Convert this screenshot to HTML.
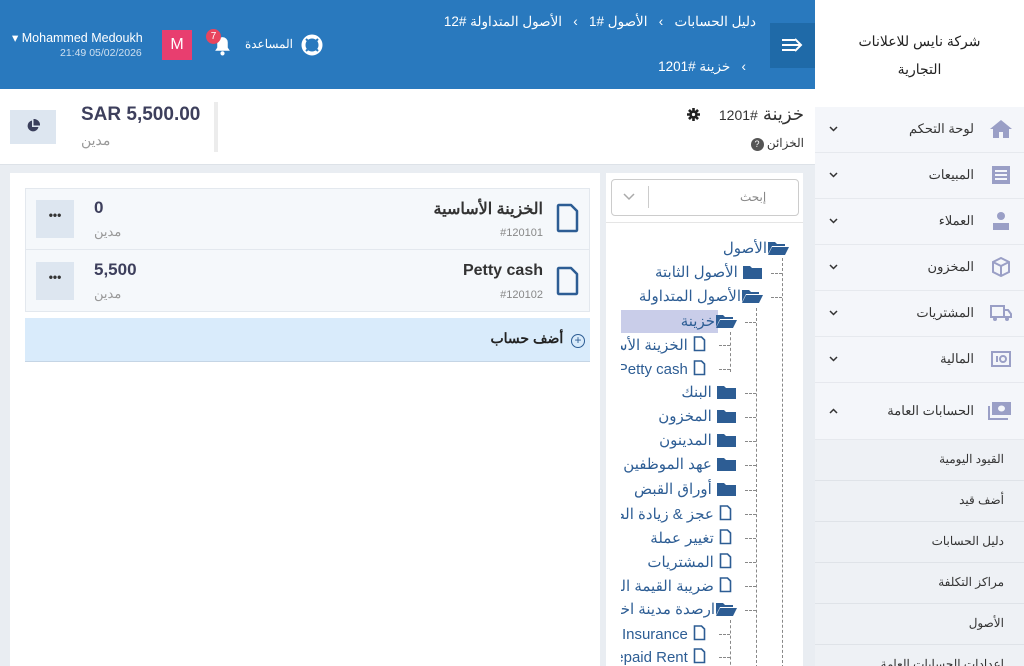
<!DOCTYPE html>
<html style="overflow:hidden;width:1024px;height:666px"><head><meta charset="utf-8">
<style>
*{box-sizing:border-box;margin:0;padding:0}
body{width:1024px;height:666px;overflow:hidden;background:#e9edf2;font-family:"Liberation Sans","Noto Sans CJK SC",sans-serif;position:relative;color:#333}
.a{position:absolute}
.hdr{left:0;top:0;width:815px;height:89px;background:#2979be}
.w{color:#fff}
.side{left:815px;top:0;width:209px;height:666px;background:#f3f6fa;overflow:hidden}
.mi{position:absolute;left:0;width:209px;height:46px;border-bottom:1px solid #e6e9ee;background:#f4f6fa}
.mi .t{position:absolute;right:50px;top:14px;font-size:13px;color:#333;direction:rtl}
.mi .ch{position:absolute;left:14px;top:19px}
.mi .ic{position:absolute;right:12px;top:12px}
.si{position:absolute;left:0;width:209px;height:41px;border-bottom:1px solid #dfe3e8;background:#eef1f5}
.si .t{position:absolute;right:20px;top:12px;font-size:12px;color:#333;direction:rtl}
.tree{left:621px;top:226px;width:182px;height:440px;overflow:hidden}
.r{position:absolute;white-space:nowrap;direction:rtl;font-size:15px;color:#2d5d94;line-height:18px}
.r svg{vertical-align:-2px;margin-left:1px}
.vd{position:absolute;border-left:1px dashed #888;width:0}
.hd{position:absolute;border-top:1px dashed #888;height:0}
</style></head><body>
<div class="a hdr"></div>
<div class="a w" style="left:12px;top:30px;font-size:12.5px">▾ Mohammed Medoukh</div>
<div class="a" style="left:60px;top:47px;font-size:10.5px;color:#cfe0f0">21:49 05/02/2026</div>
<div class="a w" style="left:162px;top:30px;width:30px;height:30px;background:#e83e6f;font-size:16px;text-align:center;line-height:30px">M</div>
<svg class="a" style="left:212px;top:35px" width="21" height="21" viewBox="0 0 20 20"><path d="M10 2a5 5 0 0 0-5 5v5l-2 3h14l-2-3V7a5 5 0 0 0-5-5z" fill="#fff"/><circle cx="10" cy="17.5" r="2" fill="#fff"/></svg>
<div class="a w" style="left:206px;top:29px;width:15px;height:15px;border-radius:50%;background:#e8455e;font-size:10px;text-align:center;line-height:15px">7</div>
<div class="a w" style="left:233px;top:37px;width:60px;text-align:right;font-size:12px;direction:rtl">المساعدة</div>
<svg class="a" style="left:301px;top:34px" width="22" height="22" viewBox="0 0 22 22"><circle cx="11" cy="11" r="8.5" fill="none" stroke="#fff" stroke-width="4"/><path d="M5 5l3 3M17 5l-3 3M5 17l3-3M17 17l-3-3" stroke="#2979be" stroke-width="2"/></svg>
<div class="a w" style="left:440px;top:14px;font-size:13.5px;direction:rtl;width:316px;text-align:right;white-space:nowrap">دليل الحسابات &nbsp;&nbsp;›&nbsp;&nbsp; الأصول #1 &nbsp;&nbsp;›&nbsp;&nbsp; الأصول المتداولة #12</div>
<div class="a w" style="left:640px;top:59px;font-size:13.5px;direction:rtl;width:106px;text-align:right;white-space:nowrap">›&nbsp;&nbsp; خزينة #1201</div>
<div class="a" style="left:770px;top:23px;width:45px;height:45px;background:#1f6aa8"></div>
<svg class="a" style="left:781px;top:37px" width="22" height="16" viewBox="0 0 22 16"><path d="M1 3h13M1 8h18M1 13h13M14 2l6 6-6 6" fill="none" stroke="#fff" stroke-width="2"/></svg>
<div class="a" style="left:0;top:89px;width:815px;height:76px;background:#fff;border-bottom:1px solid #dde2e8"></div>
<div class="a" style="left:10px;top:110px;width:46px;height:34px;background:#dde6f0"></div>
<svg class="a" style="left:26px;top:119px" width="14" height="14" viewBox="0 0 14 14"><path d="M6 1.5A5.5 5.5 0 1 0 12.5 8H6z" fill="#3a3f5c"/><path d="M7.5 0A6 6 0 0 1 14 6.5H7.5z" fill="#3a3f5c"/></svg>
<div class="a" style="left:81px;top:104px;font-size:19px;font-weight:bold;color:#3d3f5c">SAR 5,500.00</div>
<div class="a" style="left:81px;top:132px;font-size:14px;color:#999">مدين</div>
<div class="a" style="left:214px;top:102px;width:4px;height:50px;background:#ececec"></div>
<div class="a" style="left:700px;top:104px;font-size:18px;color:#333;direction:rtl;white-space:nowrap;width:104px;text-align:right">خزينة <span style="font-size:14px">#1201</span></div>
<svg class="a" style="left:687px;top:108px" width="13" height="13" viewBox="0 0 12 12"><g stroke="#222" stroke-width="2.4"><path d="M6 0v12M0 6h12M1.8 1.8l8.4 8.4M10.2 1.8l-8.4 8.4"/></g><circle cx="6" cy="6" r="3.8" fill="#222"/><circle cx="6" cy="6" r="1.5" fill="#fff"/></svg>
<div class="a" style="left:746px;top:136px;font-size:12px;color:#333;direction:rtl;width:58px;text-align:right;white-space:nowrap">الخزائن <span style="display:inline-block;width:13px;height:13px;border-radius:50%;background:#555;color:#fff;font-size:9px;text-align:center;line-height:13px">?</span></div>
<div class="a" style="left:10px;top:173px;width:590px;height:493px;background:#fff"></div>
<div class="a" style="left:25px;top:188px;width:565px;height:124px;background:#f5f8fb;border:1px solid #e3e8ee"></div>
<div class="a" style="left:25px;top:249px;width:565px;height:1px;background:#e3e8ee"></div>
<div class="a" style="left:36px;top:200px;width:38px;height:38px;background:#dde6f0;text-align:center;font-size:12px;line-height:30px;color:#333;font-weight:bold">•••</div>
<div class="a" style="left:36px;top:262px;width:38px;height:38px;background:#dde6f0;text-align:center;font-size:12px;line-height:30px;color:#333;font-weight:bold">•••</div>
<div class="a" style="left:94px;top:198px;font-size:17px;font-weight:bold;color:#3d3f5c">0</div>
<div class="a" style="left:94px;top:224px;font-size:13px;color:#999">مدين</div>
<div class="a" style="left:94px;top:260px;font-size:17px;font-weight:bold;color:#3d3f5c">5,500</div>
<div class="a" style="left:94px;top:286px;font-size:13px;color:#999">مدين</div>
<div class="a" style="left:380px;top:199px;width:163px;text-align:right;font-size:16px;font-weight:bold;color:#333;direction:rtl">الخزينة الأساسية</div>
<div class="a" style="left:460px;top:227px;width:83px;text-align:right;font-size:11px;color:#888">#120101</div>
<div class="a" style="left:380px;top:262px;width:163px;text-align:right;font-size:16px;font-weight:bold;color:#333">Petty cash</div>
<div class="a" style="left:460px;top:289px;width:83px;text-align:right;font-size:11px;color:#888">#120102</div>
<svg class="a" style="left:556px;top:203px" width="24" height="30" viewBox="0 0 24 30"><path d="M3 2h12l6 6v19a1 1 0 0 1-1 1H3a1 1 0 0 1-1-1V3a1 1 0 0 1 1-1z" fill="none" stroke="#2d5d94" stroke-width="2.5" stroke-linejoin="round"/></svg>
<svg class="a" style="left:556px;top:266px" width="24" height="30" viewBox="0 0 24 30"><path d="M3 2h12l6 6v19a1 1 0 0 1-1 1H3a1 1 0 0 1-1-1V3a1 1 0 0 1 1-1z" fill="none" stroke="#2d5d94" stroke-width="2.5" stroke-linejoin="round"/></svg>
<div class="a" style="left:25px;top:318px;width:565px;height:44px;background:#d9ebfb;border-bottom:1px solid #c5d5e5"></div>
<div class="a" style="left:470px;top:330px;width:115px;text-align:right;font-size:14px;font-weight:bold;color:#222;direction:rtl;white-space:nowrap"><span style="display:inline-block;width:14px;height:14px;border:1.5px solid #2d5d94;border-radius:50%;font-size:12px;line-height:11px;text-align:center;color:#2d5d94;font-weight:normal;vertical-align:-1px">+</span>&nbsp; أضف حساب</div>
<div class="a" style="left:606px;top:173px;width:197px;height:493px;background:#fff"></div>
<div class="a" style="left:611px;top:179px;width:188px;height:37px;border:1px solid #ccc;border-radius:4px;background:#fff"></div>
<div class="a" style="left:648px;top:186px;width:1px;height:22px;background:#ccc"></div>
<svg class="a" style="left:623px;top:193px" width="12" height="8" viewBox="0 0 12 8"><path d="M1 1l5 5 5-5" fill="none" stroke="#aaa" stroke-width="1.5"/></svg>
<div class="a" style="left:740px;top:190px;font-size:12px;color:#888;direction:rtl">إبحث</div>
<div class="a" style="left:606px;top:222px;width:197px;height:1px;background:#e5e5e5"></div>
<div class="a tree">
<div class="vd" style="left:161px;top:32px;height:410px"></div>
<div class="vd" style="left:135px;top:82px;height:360px"></div>
<div class="vd" style="left:109px;top:106px;height:40px"></div>
<div class="vd" style="left:109px;top:394px;height:50px"></div>
<div class="hd" style="left:150px;top:47px;width:11px"></div>
<div class="hd" style="left:150px;top:71px;width:11px"></div>
<div class="hd" style="left:124px;top:96px;width:11px"></div>
<div class="hd" style="left:98px;top:119px;width:11px"></div>
<div class="hd" style="left:98px;top:143px;width:11px"></div>
<div class="hd" style="left:124px;top:167px;width:11px"></div><div class="hd" style="left:124px;top:191px;width:11px"></div><div class="hd" style="left:124px;top:215px;width:11px"></div><div class="hd" style="left:124px;top:239px;width:11px"></div><div class="hd" style="left:124px;top:264px;width:11px"></div><div class="hd" style="left:124px;top:288px;width:11px"></div><div class="hd" style="left:124px;top:312px;width:11px"></div><div class="hd" style="left:124px;top:336px;width:11px"></div><div class="hd" style="left:124px;top:360px;width:11px"></div><div class="hd" style="left:124px;top:384px;width:11px"></div>
<div class="hd" style="left:98px;top:408px;width:11px"></div><div class="hd" style="left:98px;top:431px;width:11px"></div>
<div class="a" style="left:0;top:84px;width:97px;height:23px;background:#c9cde9"></div>
<div class="r" style="right:14px;top:14px"><svg width="21" height="14" viewBox="0 0 21 14"><path d="M0 1h7l2 2h8v2H4L0 13z" fill="#2d5d94"/><path d="M4 6h17l-4 8H0z" fill="#2d5d94"/></svg>الأصول</div>
<div class="r" style="right:41px;top:38px"><svg width="19" height="14" viewBox="0 0 19 14"><path d="M0 1h7l2 2h10v11H0z" fill="#2d5d94"/></svg> الأصول الثابتة</div>
<div class="r" style="right:40px;top:62px"><svg width="21" height="14" viewBox="0 0 21 14"><path d="M0 1h7l2 2h8v2H4L0 13z" fill="#2d5d94"/><path d="M4 6h17l-4 8H0z" fill="#2d5d94"/></svg>الأصول المتداولة</div>
<div class="r" style="right:66px;top:87px"><svg width="21" height="14" viewBox="0 0 21 14"><path d="M0 1h7l2 2h8v2H4L0 13z" fill="#2d5d94"/><path d="M4 6h17l-4 8H0z" fill="#2d5d94"/></svg>خزينة</div>
<div class="r" style="right:97px;top:110px"><svg width="13" height="16" viewBox="0 0 13 16"><path d="M1.5 1h7l3 3v10.5h-10z" fill="none" stroke="#2d5d94" stroke-width="1.6"/></svg> الخزينة الأساسية</div>
<div class="r" style="right:97px;top:134px"><svg width="13" height="16" viewBox="0 0 13 16"><path d="M1.5 1h7l3 3v10.5h-10z" fill="none" stroke="#2d5d94" stroke-width="1.6"/></svg> Petty cash</div>
<div class="r" style="right:67px;top:158px"><svg width="19" height="14" viewBox="0 0 19 14"><path d="M0 1h7l2 2h10v11H0z" fill="#2d5d94"/></svg> البنك</div>
<div class="r" style="right:67px;top:182px"><svg width="19" height="14" viewBox="0 0 19 14"><path d="M0 1h7l2 2h10v11H0z" fill="#2d5d94"/></svg> المخزون</div>
<div class="r" style="right:67px;top:206px"><svg width="19" height="14" viewBox="0 0 19 14"><path d="M0 1h7l2 2h10v11H0z" fill="#2d5d94"/></svg> المدينون</div>
<div class="r" style="right:67px;top:230px"><svg width="19" height="14" viewBox="0 0 19 14"><path d="M0 1h7l2 2h10v11H0z" fill="#2d5d94"/></svg> عهد الموظفين</div>
<div class="r" style="right:67px;top:255px"><svg width="19" height="14" viewBox="0 0 19 14"><path d="M0 1h7l2 2h10v11H0z" fill="#2d5d94"/></svg> أوراق القبض</div>
<div class="r" style="right:71px;top:279px"><svg width="13" height="16" viewBox="0 0 13 16"><path d="M1.5 1h7l3 3v10.5h-10z" fill="none" stroke="#2d5d94" stroke-width="1.6"/></svg> عجز &amp; زيادة الصندوق</div>
<div class="r" style="right:71px;top:303px"><svg width="13" height="16" viewBox="0 0 13 16"><path d="M1.5 1h7l3 3v10.5h-10z" fill="none" stroke="#2d5d94" stroke-width="1.6"/></svg> تغيير عملة</div>
<div class="r" style="right:71px;top:327px"><svg width="13" height="16" viewBox="0 0 13 16"><path d="M1.5 1h7l3 3v10.5h-10z" fill="none" stroke="#2d5d94" stroke-width="1.6"/></svg> المشتريات</div>
<div class="r" style="right:71px;top:351px"><svg width="13" height="16" viewBox="0 0 13 16"><path d="M1.5 1h7l3 3v10.5h-10z" fill="none" stroke="#2d5d94" stroke-width="1.6"/></svg> ضريبة القيمة المضافة</div>
<div class="r" style="right:66px;top:375px"><svg width="21" height="14" viewBox="0 0 21 14"><path d="M0 1h7l2 2h8v2H4L0 13z" fill="#2d5d94"/><path d="M4 6h17l-4 8H0z" fill="#2d5d94"/></svg>ارصدة مدينة اخرى</div>
<div class="r" style="right:97px;top:399px"><svg width="13" height="16" viewBox="0 0 13 16"><path d="M1.5 1h7l3 3v10.5h-10z" fill="none" stroke="#2d5d94" stroke-width="1.6"/></svg> Prepaid Insurance</div>
<div class="r" style="right:97px;top:422px"><svg width="13" height="16" viewBox="0 0 13 16"><path d="M1.5 1h7l3 3v10.5h-10z" fill="none" stroke="#2d5d94" stroke-width="1.6"/></svg> Prepaid Rent</div>
</div>
<div class="a side">
<div class="a" style="left:0;top:0;width:209px;height:107px;background:#fff"></div>
<div class="a" style="left:0;top:27px;width:209px;text-align:center;font-size:14px;line-height:28px;color:#222;direction:rtl">شركة نايس للاعلانات<br>التجارية</div>
<div class="mi" style="top:107px"><svg class="ic" width="22" height="20" viewBox="0 0 22 20"><path d="M11 1L0 10h3v9h6v-6h4v6h6v-9h3z" fill="#9a9fc6"/></svg><span class="t">لوحة التحكم</span><svg class="ch" width="9" height="6" viewBox="0 0 9 6"><path d="M1 1l3.5 3.5L8 1" fill="none" stroke="#333" stroke-width="1.5"/></svg></div>
<div class="mi" style="top:153px"><svg class="ic" width="22" height="20" viewBox="0 0 22 20"><rect x="2" y="1" width="18" height="18" fill="#9a9fc6"/><path d="M5 6h12M5 10h12M5 14h12" stroke="#f4f6fa" stroke-width="2"/></svg><span class="t">المبيعات</span><svg class="ch" width="9" height="6" viewBox="0 0 9 6"><path d="M1 1l3.5 3.5L8 1" fill="none" stroke="#333" stroke-width="1.5"/></svg></div>
<div class="mi" style="top:199px"><svg class="ic" width="22" height="20" viewBox="0 0 22 20"><circle cx="11" cy="5" r="4" fill="#9a9fc6"/><path d="M3 19v-7h16v7z" fill="#9a9fc6"/></svg><span class="t">العملاء</span><svg class="ch" width="9" height="6" viewBox="0 0 9 6"><path d="M1 1l3.5 3.5L8 1" fill="none" stroke="#333" stroke-width="1.5"/></svg></div>
<div class="mi" style="top:245px"><svg class="ic" width="22" height="20" viewBox="0 0 22 20"><path d="M11 1l8 4v10l-8 4-8-4V5zM3 5l8 4 8-4M11 9v10" fill="none" stroke="#9a9fc6" stroke-width="2"/></svg><span class="t">المخزون</span><svg class="ch" width="9" height="6" viewBox="0 0 9 6"><path d="M1 1l3.5 3.5L8 1" fill="none" stroke="#333" stroke-width="1.5"/></svg></div>
<div class="mi" style="top:291px"><svg class="ic" width="22" height="20" viewBox="0 0 22 20"><path d="M1 3h13v11H1zM14 7h4l3 4v3h-7" fill="none" stroke="#9a9fc6" stroke-width="2"/><circle cx="5" cy="16" r="2" fill="#9a9fc6"/><circle cx="17" cy="16" r="2" fill="#9a9fc6"/></svg><span class="t">المشتريات</span><svg class="ch" width="9" height="6" viewBox="0 0 9 6"><path d="M1 1l3.5 3.5L8 1" fill="none" stroke="#333" stroke-width="1.5"/></svg></div>
<div class="mi" style="top:337px"><svg class="ic" width="22" height="20" viewBox="0 0 22 20"><rect x="2" y="3" width="18" height="14" fill="none" stroke="#9a9fc6" stroke-width="2"/><circle cx="13" cy="10" r="3" fill="none" stroke="#9a9fc6" stroke-width="2"/><path d="M7 7v6" stroke="#9a9fc6" stroke-width="2"/></svg><span class="t">المالية</span><svg class="ch" width="9" height="6" viewBox="0 0 9 6"><path d="M1 1l3.5 3.5L8 1" fill="none" stroke="#333" stroke-width="1.5"/></svg></div>
<div class="mi" style="top:383px;height:57px;box-shadow:0 3px 4px rgba(0,0,0,.1)"><svg class="ic" width="24" height="22" viewBox="0 0 24 22" style="top:17px"><rect x="4" y="2" width="19" height="13" fill="#9a9fc6"/><ellipse cx="13.5" cy="8.5" rx="3.5" ry="3" fill="#f4f6fa"/><path d="M1 6v13h19" fill="none" stroke="#9a9fc6" stroke-width="2"/></svg><span class="t" style="top:20px">الحسابات العامة</span><svg class="ch" style="top:25px" width="9" height="6" viewBox="0 0 9 6"><path d="M1 5l3.5-3.5L8 5" fill="none" stroke="#333" stroke-width="1.5"/></svg></div>
<div class="si" style="top:440px"><span class="t">القيود اليومية</span></div>
<div class="si" style="top:481px"><span class="t">أضف قيد</span></div>
<div class="si" style="top:522px"><span class="t">دليل الحسابات</span></div>
<div class="si" style="top:563px"><span class="t">مراكز التكلفة</span></div>
<div class="si" style="top:604px"><span class="t">الأصول</span></div>
<div class="si" style="top:645px"><span class="t">إعدادات الحسابات العامة</span></div>
</div>
</body></html>
